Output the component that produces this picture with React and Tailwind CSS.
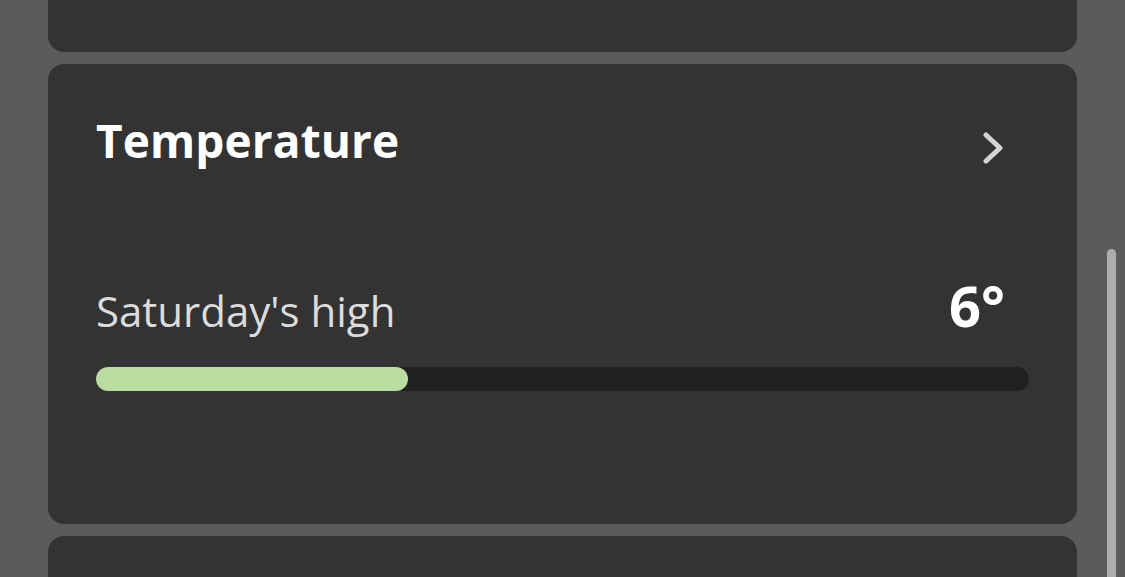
export default function App() {
  const high = 6;
  const pct = 33.4;

  return (
    <div
      className="relative h-[577px] w-[1125px] overflow-hidden bg-[#5b5b5b]"
      style={{ fontFamily: '"Open Sans", "Noto Sans", sans-serif' }}
    >
      <div className="flex flex-col gap-3 px-12">
        {/* previous card, scrolled mostly out of view */}
        <div className="-mt-[148px] h-[200px] rounded-2xl bg-[#333333]" />

        {/* temperature card */}
        <div className="h-[460px] rounded-2xl bg-[#333333] px-12 pt-[53px]">
          <div className="flex items-start justify-between">
            <h2 className="text-[46px] font-bold leading-none tracking-[0.1px] text-white">
              Temperature
            </h2>
            <button className="mr-[26px] mt-[15px] flex h-8 w-5 items-center justify-center">
              <svg width="20" height="32" viewBox="0 0 20 32" fill="none">
                <polyline
                  points="3,3 17,16 3,29"
                  stroke="#d4d4d4"
                  strokeWidth="5"
                  strokeLinecap="round"
                  strokeLinejoin="round"
                />
              </svg>
            </button>
          </div>

          <div className="mt-[113px] flex items-baseline justify-between pr-[24px]">
            <p className="text-[42px] leading-none text-[#dcdcdc]">Saturday's high</p>
            <p className="text-[56px] font-bold leading-none text-white">{high}°</p>
          </div>

          <div className="mt-[34px] h-6 w-full rounded-full bg-[#212121]">
            <div
              className="h-6 rounded-full bg-[#b9dca0]"
              style={{ width: `${pct}%` }}
            />
          </div>
        </div>

        {/* next card */}
        <div className="h-[200px] rounded-2xl bg-[#333333]" />
      </div>

      {/* overlay scrollbar */}
      <div className="absolute left-[1107px] top-[249px] h-[400px] w-[9px] rounded-full bg-[#adadad]" />
    </div>
  );
}
